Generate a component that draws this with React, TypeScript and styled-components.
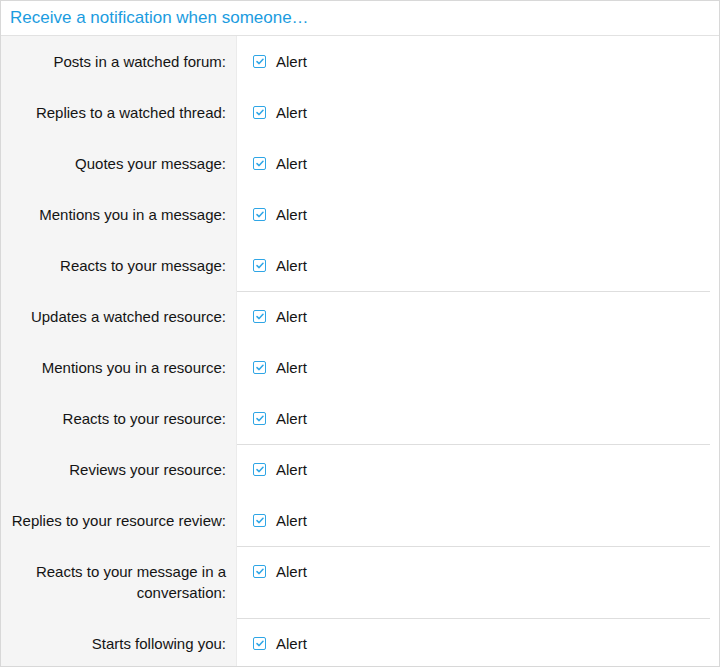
import { createGlobalStyle, styled } from "styled-components";

const GlobalStyle = createGlobalStyle`
    html, body {
        margin: 0;
        padding: 0;
        background: #ffffff;
    }
    body {
        font-family: "Liberation Sans", Arial, Helvetica, sans-serif;
        color: #141414;
    }
`;

const Block = styled.section`
    width: 720px;
    box-sizing: border-box;
    border: 1px solid #d8d8d8;
    background: #ffffff;
`;

const Header = styled.h3`
    margin: 0;
    height: 34px;
    padding: 0 9px;
    display: flex;
    align-items: center;
    font-size: 17px;
    font-weight: normal;
    color: #1b9ce0;
    border-bottom: 1px solid #e2e2e2;
`;

const Rows = styled.dl`
    margin: 0;
    display: flex;
    flex-direction: column;
`;

const Row = styled.div`
    display: grid;
    grid-template-columns: 236px 1fr;
`;

const Label = styled.dt<{ $last?: boolean }>`
    margin: 0;
    background: #f5f5f5;
    border-right: 1px solid #ebebeb;
    padding: 15px 10px ${(p) => (p.$last ? "12px" : "15px")} 4px;
    text-align: right;
    white-space: nowrap;
    font-size: 15px;
    line-height: 21px;
`;

const Value = styled.dd<{ $separated?: boolean; $last?: boolean }>`
    margin: 0 9px 0 0;
    padding: ${(p) => (p.$separated ? "14px" : "15px")} 0 ${(p) => (p.$last ? "12px" : "15px")} 16px;
    border-top: ${(p) => (p.$separated ? "1px solid #dedede" : "none")};
    display: flex;
    align-items: flex-start;
`;

const CheckLabel = styled.label`
    display: flex;
    align-items: center;
    gap: 10px;
    font-size: 15px;
    line-height: 21px;
    color: #141414;
    cursor: pointer;
`;

const Box = styled.span`
    width: 13px;
    height: 13px;
    box-sizing: border-box;
    border: 1.5px solid #2fa6e6;
    border-radius: 2px;
    display: inline-flex;
    align-items: center;
    justify-content: center;
    background: #ffffff;
`;

const items: { label: string[]; sep?: boolean }[] = [
    { label: ["Posts in a watched forum:"] },
    { label: ["Replies to a watched thread:"] },
    { label: ["Quotes your message:"] },
    { label: ["Mentions you in a message:"] },
    { label: ["Reacts to your message:"] },
    { label: ["Updates a watched resource:"], sep: true },
    { label: ["Mentions you in a resource:"] },
    { label: ["Reacts to your resource:"] },
    { label: ["Reviews your resource:"], sep: true },
    { label: ["Replies to your resource review:"] },
    { label: ["Reacts to your message in a", "conversation:"], sep: true },
    { label: ["Starts following you:"], sep: true },
];

function Check() {
    return (
        <Box>
            <svg width="8" height="7" viewBox="0 0 8 7">
                <path d="M1 3.6 L3.1 5.6 L7 1.2" fill="none" stroke="#2fa6e6" strokeWidth="1.5" strokeLinecap="round" strokeLinejoin="round" />
            </svg>
        </Box>
    );
}

export default function App() {
    return (
        <>
            <GlobalStyle />
            <Block>
                <Header>Receive a notification when someone…</Header>
                <Rows>
                    {items.map((item, i) => {
                        const last = i === items.length - 1;
                        return (
                            <Row key={item.label.join(" ")}>
                                <Label $last={last}>
                                    {item.label.map((line, j) => (
                                        <span key={line}>
                                            {j > 0 && <br />}
                                            {line}
                                        </span>
                                    ))}
                                </Label>
                                <Value $separated={item.sep} $last={last}>
                                    <CheckLabel>
                                        <Check />
                                        Alert
                                    </CheckLabel>
                                </Value>
                            </Row>
                        );
                    })}
                </Rows>
            </Block>
        </>
    );
}
